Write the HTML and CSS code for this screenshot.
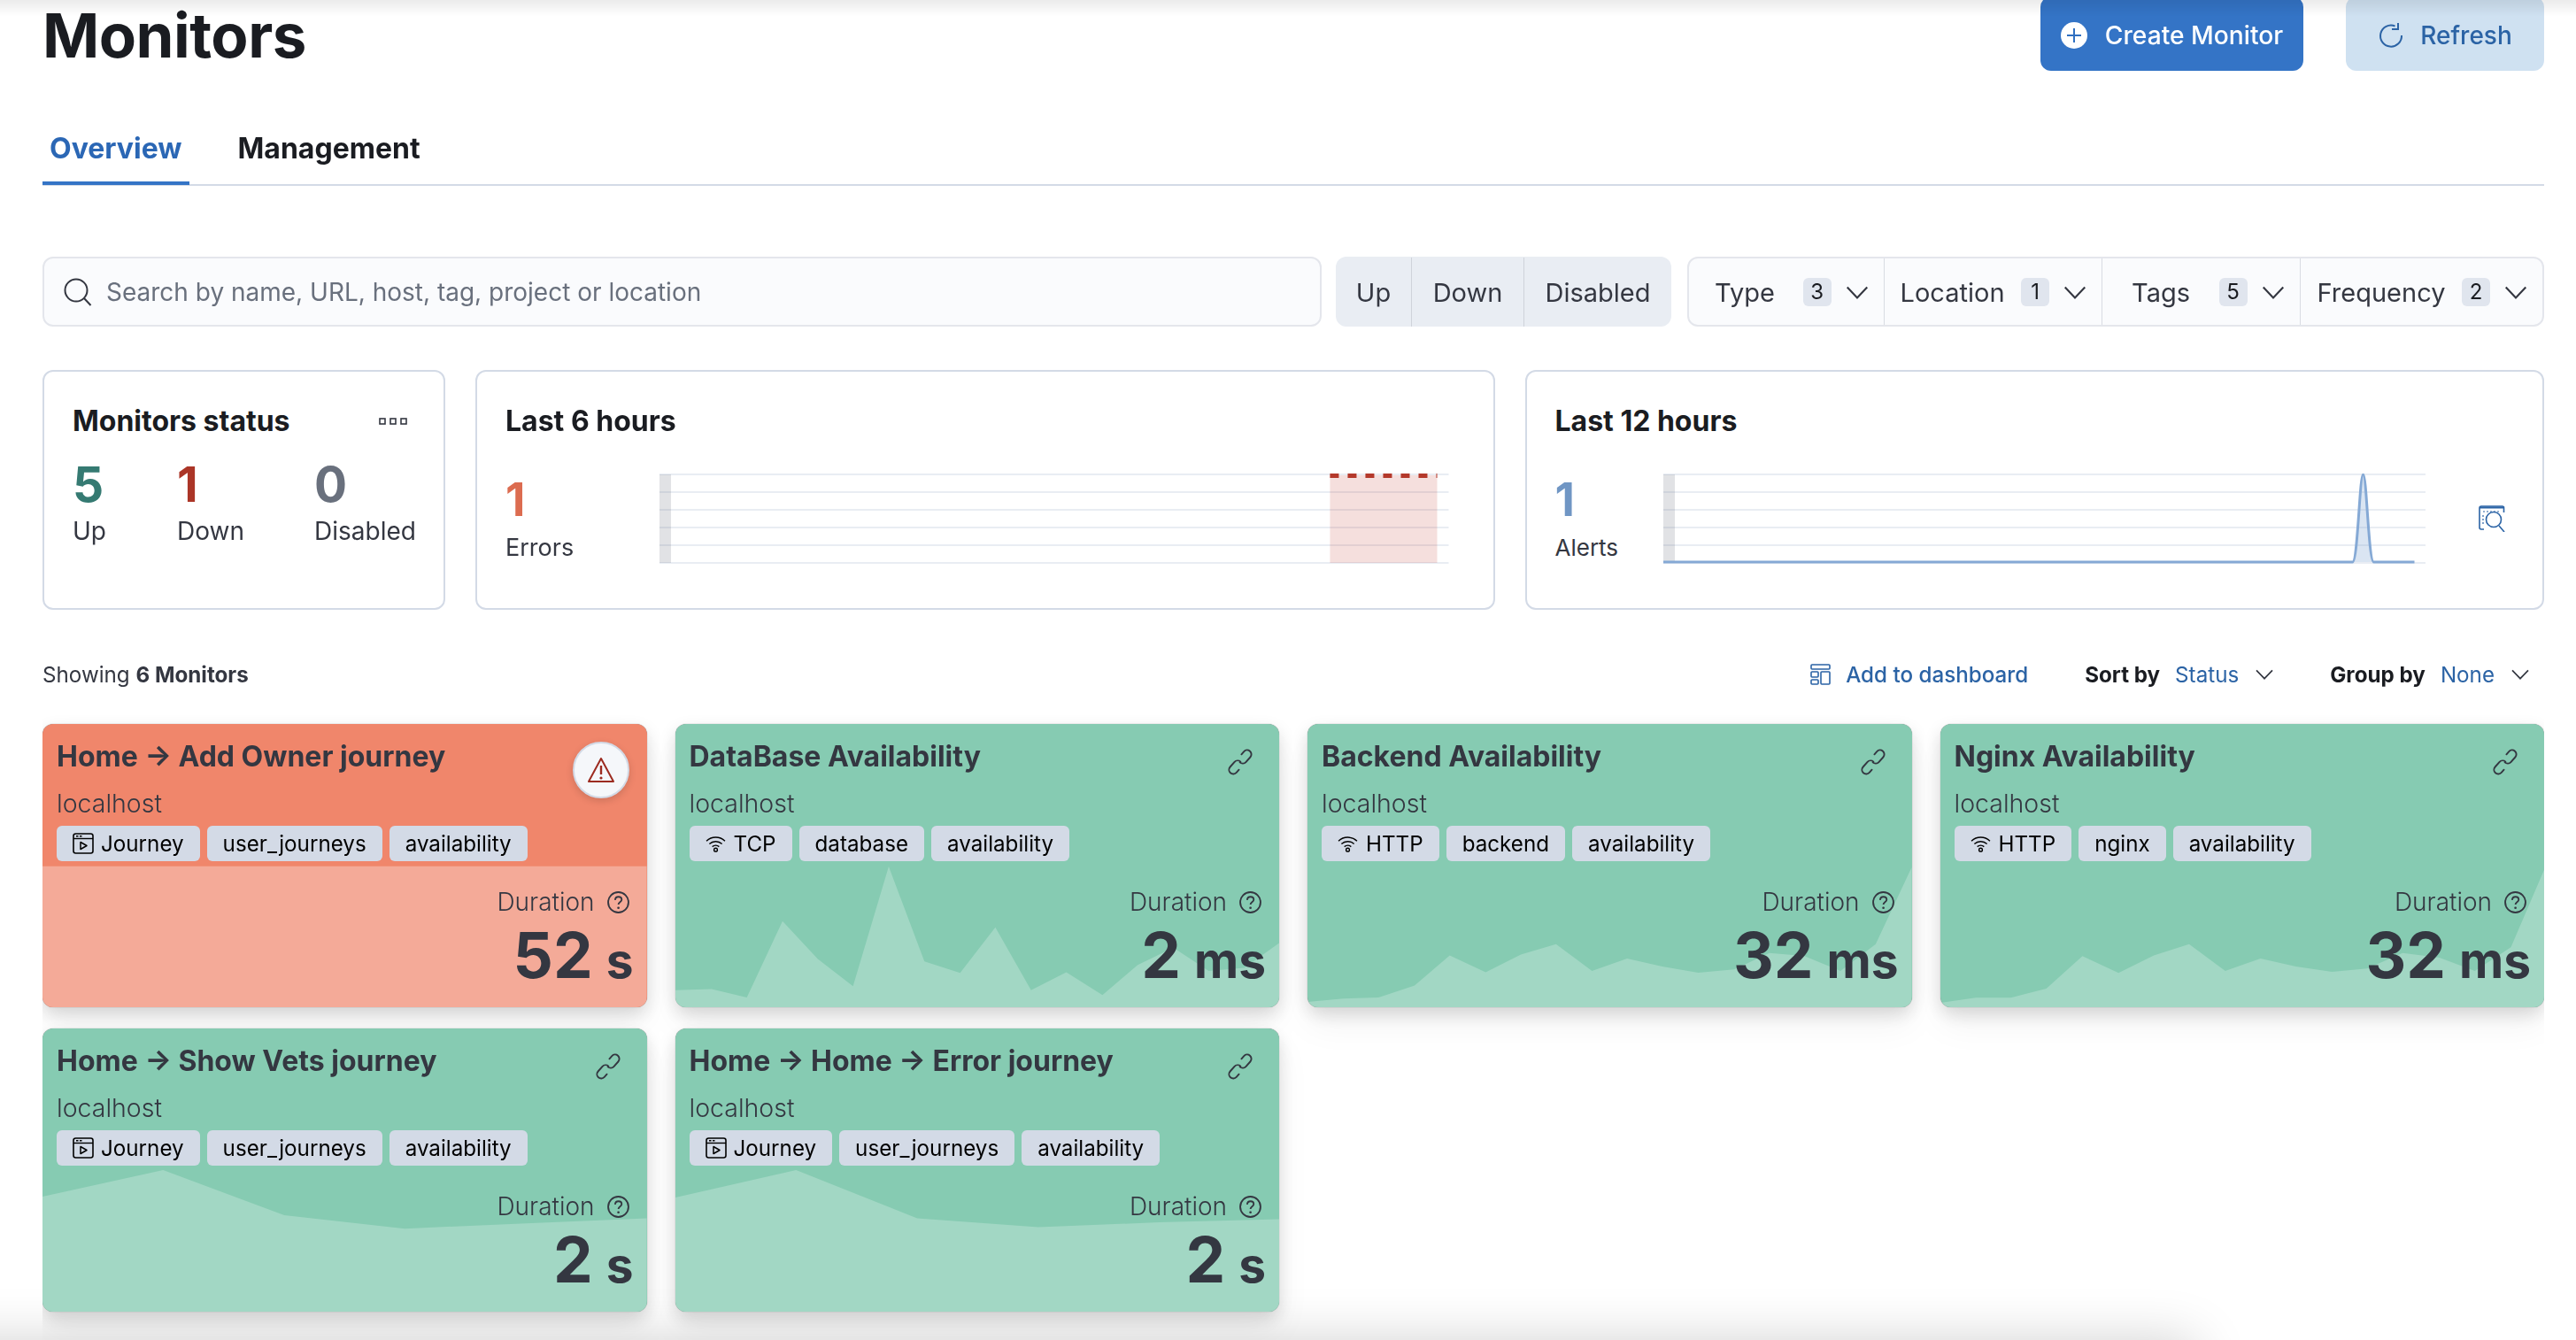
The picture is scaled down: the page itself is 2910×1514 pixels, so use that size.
FILE: index.html
```html
<!DOCTYPE html>
<html lang="en">
<head>
<meta charset="utf-8">
<title>Monitors</title>
<link rel="stylesheet" href="styles.css">
</head>
<body>
<svg class="defs" aria-hidden="true">
  <symbol id="i-link" viewBox="0 0 32 32"><g transform="rotate(-48 16 16)" fill="none" stroke="currentColor" stroke-width="1.800" stroke-linecap="round"><path d="M16.500 16a4.500 4.500 0 0 0-4.500-4.500H5a4.500 4.500 0 0 0 0 9h4"/><path d="M15.500 16a4.500 4.500 0 0 0 4.500 4.500h7a4.500 4.500 0 0 0 0-9h-4"/></g></symbol>
  <symbol id="i-help" viewBox="0 0 24 24"><circle cx="12" cy="12" r="11" fill="none" stroke="currentColor" stroke-width="1.800"/><path d="M8.500 9.500c.2-2.200 1.700-3.500 3.600-3.500 2 0 3.500 1.300 3.500 3.100 0 2.700-3.500 2.800-3.500 5.400" fill="none" stroke="currentColor" stroke-width="1.800"/><circle cx="12.100" cy="18" r="1.300" fill="currentColor"/></symbol>
  <symbol id="i-journey" viewBox="0 0 24 24"><rect x="1" y="1" width="22" height="22" rx="2.500" fill="none" stroke="currentColor" stroke-width="1.600"/><path d="M1 6.500h22" stroke="currentColor" stroke-width="1.400"/><path d="M4 3.800h2.500M8 3.800h2.500" stroke="currentColor" stroke-width="1.500"/><path d="M9 10.500v8l7-4z" fill="none" stroke="currentColor" stroke-width="1.500" stroke-linejoin="round"/></symbol>
  <symbol id="i-wifi" viewBox="0 0 24 20"><path d="M1 6.500c6.200-5.800 15.800-5.800 22 0M4.500 10c4.200-3.900 10.800-3.900 15 0M8 13.300c2.300-2 5.700-2 8 0" fill="none" stroke="currentColor" stroke-width="1.500"/><circle cx="12" cy="17" r="2" fill="none" stroke="currentColor" stroke-width="1.500"/></symbol>
  <symbol id="i-chev" viewBox="0 0 24 14"><path d="M1.500 1.500 12 12.500 22.500 1.500" fill="none" stroke="currentColor" stroke-width="2"/></symbol>
</svg>

<div class="top-shade"></div>
<div class="bottom-shade"></div>

<main class="page">
  <header class="head">
    <h1 class="title">Monitors</h1>
    <div class="head-actions">
      <button class="btn btn-primary">
        <svg class="btn-icon" viewBox="0 0 30 30"><circle cx="15" cy="15" r="15" fill="#fff"/><path d="M15 7v16M7 15h16" stroke="#2f6fc1" stroke-width="2"/></svg>
        Create Monitor
      </button>
      <button class="btn btn-soft">
        <svg class="btn-icon" viewBox="0 0 30 30"><path d="M19.500 4.500A12 12 0 1 0 27 15" fill="none" stroke="currentColor" stroke-width="2"/><path d="M21 1v7h-7" fill="none" stroke="currentColor" stroke-width="2" transform="translate(2 0)"/></svg>
        Refresh
      </button>
    </div>
  </header>

  <nav class="tabs">
    <a class="tab tab-active">Overview</a>
    <a class="tab">Management</a>
  </nav>

  <section class="filters">
    <div class="search">
      <svg class="search-icon" viewBox="0 0 32 32"><circle cx="14" cy="14" r="12.500" fill="none" stroke="#343741" stroke-width="2"/><path d="m23 23 7.500 8" stroke="#343741" stroke-width="2"/></svg>
      <span>Search by name, URL, host, tag, project or location</span>
    </div>
    <div class="status-group">
      <span class="status-item status-up">Up</span>
      <span class="status-item status-down">Down</span>
      <span class="status-item status-disabled">Disabled</span>
    </div>
    <div class="facet-group">
      <span class="facet facet-type">Type <b class="count">3</b><svg class="chev-lg"><use href="#i-chev"/></svg></span>
      <span class="facet facet-loc">Location <b class="count">1</b><svg class="chev-lg"><use href="#i-chev"/></svg></span>
      <span class="facet facet-tags">Tags <b class="count">5</b><svg class="chev-lg"><use href="#i-chev"/></svg></span>
      <span class="facet facet-freq">Frequency <b class="count">2</b><svg class="chev-lg"><use href="#i-chev"/></svg></span>
    </div>
  </section>

  <section class="stats">
    <article class="panel">
      <div class="panel-head">
        <h2 class="panel-title">Monitors status</h2>
        <svg class="more" viewBox="0 0 32 8"><g fill="none" stroke="#343741" stroke-width="1.600"><rect x="1" y="1" width="6" height="6"/><rect x="13" y="1" width="6" height="6"/><rect x="25" y="1" width="6" height="6"/></g></svg>
      </div>
      <div class="status-grid">
        <div><div class="big c-green">5</div><div class="big-label">Up</div></div>
        <div><div class="big c-red">1</div><div class="big-label">Down</div></div>
        <div><div class="big c-gray">0</div><div class="big-label">Disabled</div></div>
      </div>
    </article>

    <article class="panel panel-errors">
      <h2 class="panel-title">Last 6 hours</h2>
      <div class="metric">
        <div class="metric-text metric-wide"><div class="num c-orange">1</div><div class="metric-label">Errors</div></div>
        <svg class="chart" viewBox="0 0 891 102" preserveAspectRatio="none">
          <g class="grid-lines"><path d="M0 1h891M0 21h891M0 41h891M0 61h891M0 81h891M0 101h891"/></g>
          <rect x="0" y="1" width="13" height="100" fill="#69707d" opacity=".2"/>
          <rect x="757" y="2" width="121" height="99" fill="#bd271e" opacity=".15"/>
          <path d="M757 2.500h121" stroke="#b4392b" stroke-width="5" stroke-dasharray="10 10"/>
        </svg>
      </div>
    </article>

    <article class="panel panel-alerts">
      <h2 class="panel-title">Last 12 hours</h2>
      <div class="metric">
        <div class="metric-text metric-narrow"><div class="num c-blue">1</div><div class="metric-label metric-label-sm">Alerts</div></div>
        <svg class="chart" viewBox="0 0 862 102" preserveAspectRatio="none">
          <g class="grid-lines"><path d="M0 1h862M0 21h862M0 41h862M0 61h862M0 81h862M0 101h862"/></g>
          <rect x="0" y="1" width="13" height="100" fill="#69707d" opacity=".2"/>
          <path d="M0 100H779C785 100 787 1 791 1 795 1 797 100 803 100H849" fill="#85a9d5" fill-opacity=".3" stroke="#85a9d5" stroke-width="3"/>
        </svg>
        <svg class="inspect" viewBox="0 0 31 31"><path d="M7 28H4a2 2 0 0 1-2-2V4a2 2 0 0 1 2-2h24a2 2 0 0 1 1.500 1v6" fill="none" stroke="#2b63a5" stroke-width="1.600"/><path d="M2 3.500h27" stroke="#2b63a5" stroke-width="2"/><path d="M6 8h19M6 12v12" stroke="#2b63a5" stroke-width="1.200" stroke-dasharray="2 2"/><circle cx="18" cy="17" r="8.500" fill="#fff" stroke="#2b63a5" stroke-width="1.600"/><path d="m24 24 6 7" stroke="#2b63a5" stroke-width="1.600"/></svg>
      </div>
    </article>
  </section>

  <section class="toolbar">
    <div class="showing">Showing <b>6 Monitors</b></div>
    <div class="tools">
      <a class="tool-link">
        <svg class="dash-icon" viewBox="0 0 23 24"><g fill="none" stroke="#2b63a5" stroke-width="1.600"><rect x="1" y="1" width="21" height="5" rx="1"/><rect x="1" y="9" width="8" height="6" rx="1"/><rect x="1" y="18" width="8" height="5" rx="1"/><rect x="12" y="9" width="10" height="14" rx="1"/></g></svg>
        Add to dashboard
      </a>
      <span class="tool-select tool-sort"><b>Sort by</b><span class="tool-value">Status</span><svg class="chev-sm"><use href="#i-chev"/></svg></span>
      <span class="tool-select tool-group"><b>Group by</b><span class="tool-value">None</span><svg class="chev-sm"><use href="#i-chev"/></svg></span>
    </div>
  </section>

  <div class="grid-clip">
    <section class="monitors">

      <article class="mon mon-down">
        <svg class="spark" viewBox="0 0 1337 958" preserveAspectRatio="none"><path d="M0 481H1337V958H0Z"/></svg>
        <span class="alert-badge"><svg viewBox="0 0 32 30" class="alert-icon"><path d="M16 2 2 28h28Z" fill="none" stroke="#9c2b20" stroke-width="2" stroke-linejoin="round"/><path d="M16 10v10" stroke="#9c2b20" stroke-width="2.400"/><circle cx="16" cy="24" r="1.600" fill="#9c2b20"/></svg></span>
        <div class="mon-body">
          <h3 class="mon-title">Home → Add Owner journey</h3>
          <div class="mon-host">localhost</div>
          <div class="tags"><span class="tag"><svg class="tag-journey"><use href="#i-journey"/></svg>Journey</span><span class="tag">user_journeys</span><span class="tag">availability</span></div>
          <div class="mon-foot">
            <div class="duration">Duration <svg class="help"><use href="#i-help"/></svg></div>
            <div class="value">52<small>s</small></div>
          </div>
        </div>
      </article>

      <article class="mon mon-up">
        <svg class="spark" viewBox="0 0 1337 958" preserveAspectRatio="none"><path d="M0 900 80 897 158 925 237 667 315 795 393 887 472 482 551 803 630 842 708 688 787 900 865 840 945 917 1023 815 1102 757 1180 835 1259 825 1337 740V958H0Z"/></svg>
        <svg class="link"><use href="#i-link"/></svg>
        <div class="mon-body">
          <h3 class="mon-title">DataBase Availability</h3>
          <div class="mon-host">localhost</div>
          <div class="tags"><span class="tag"><svg class="tag-wifi"><use href="#i-wifi"/></svg>TCP</span><span class="tag">database</span><span class="tag">availability</span></div>
          <div class="mon-foot">
            <div class="duration">Duration <svg class="help"><use href="#i-help"/></svg></div>
            <div class="value">2<small>ms</small></div>
          </div>
        </div>
      </article>

      <article class="mon mon-up">
        <svg class="spark" viewBox="0 0 739 958" preserveAspectRatio="none"><path d="M0 940 44 929 87 925 131 885 174 783 218 840 261 780 304 745 348 835 391 793 434 820 478 841 522 830 565 775 608 785 652 835 695 745 739 485V958H0Z"/></svg>
        <svg class="link"><use href="#i-link"/></svg>
        <div class="mon-body">
          <h3 class="mon-title">Backend Availability</h3>
          <div class="mon-host">localhost</div>
          <div class="tags"><span class="tag"><svg class="tag-wifi"><use href="#i-wifi"/></svg>HTTP</span><span class="tag">backend</span><span class="tag">availability</span></div>
          <div class="mon-foot">
            <div class="duration">Duration <svg class="help"><use href="#i-help"/></svg></div>
            <div class="value">32<small>ms</small></div>
          </div>
        </div>
      </article>

      <article class="mon mon-up">
        <svg class="spark" viewBox="0 0 736 958" preserveAspectRatio="none"><path d="M0 943 43 926 86 926 129 895 173 785 217 842 260 783 303 745 347 835 390 793 433 820 477 838 520 827 563 775 608 790 651 835 695 755 736 490V958H0Z"/></svg>
        <svg class="link"><use href="#i-link"/></svg>
        <div class="mon-body">
          <h3 class="mon-title">Nginx Availability</h3>
          <div class="mon-host">localhost</div>
          <div class="tags"><span class="tag"><svg class="tag-wifi"><use href="#i-wifi"/></svg>HTTP</span><span class="tag">nginx</span><span class="tag">availability</span></div>
          <div class="mon-foot">
            <div class="duration">Duration <svg class="help"><use href="#i-help"/></svg></div>
            <div class="value">32<small>ms</small></div>
          </div>
        </div>
      </article>

      <article class="mon mon-up">
        <svg class="spark" viewBox="0 0 1337 958" preserveAspectRatio="none"><path d="M0 569 267 479 535 632 802 677 1070 659 1337 642V958H0Z"/></svg>
        <svg class="link"><use href="#i-link"/></svg>
        <div class="mon-body">
          <h3 class="mon-title">Home → Show Vets journey</h3>
          <div class="mon-host">localhost</div>
          <div class="tags"><span class="tag"><svg class="tag-journey"><use href="#i-journey"/></svg>Journey</span><span class="tag">user_journeys</span><span class="tag">availability</span></div>
          <div class="mon-foot">
            <div class="duration">Duration <svg class="help"><use href="#i-help"/></svg></div>
            <div class="value">2<small>s</small></div>
          </div>
        </div>
      </article>

      <article class="mon mon-up">
        <svg class="spark" viewBox="0 0 1337 958" preserveAspectRatio="none"><path d="M0 572 267 479 535 642 803 672 1070 656 1337 645V958H0Z"/></svg>
        <svg class="link"><use href="#i-link"/></svg>
        <div class="mon-body">
          <h3 class="mon-title">Home → Home → Error journey</h3>
          <div class="mon-host">localhost</div>
          <div class="tags"><span class="tag"><svg class="tag-journey"><use href="#i-journey"/></svg>Journey</span><span class="tag">user_journeys</span><span class="tag">availability</span></div>
          <div class="mon-foot">
            <div class="duration">Duration <svg class="help"><use href="#i-help"/></svg></div>
            <div class="value">2<small>s</small></div>
          </div>
        </div>
      </article>

    </section>
  </div>
</main>
</body>
</html>
```

FILE: styles.css
```css
* { box-sizing: border-box; }
html, body { margin: 0; height: 100%; overflow: hidden; background: #fff; }
body { font-family: Inter, "Noto Sans", sans-serif; color: #343741; }
.defs { position: absolute; width: 0; height: 0; }

.top-shade {
  position: fixed; left: 0; right: 0; top: 0; height: 18px; z-index: 5;
  background: linear-gradient(rgba(0,0,0,.08), rgba(0,0,0,0));
}
.bottom-shade {
  position: fixed; left: -120px; width: 2600px; bottom: -120px; height: 120px;
  box-shadow: 0 0 60px rgba(0,0,0,.18);
}

.page { position: relative; padding: 0 36px 0 48px; height: 1514px; display: flex; flex-direction: column; }

.head { display: flex; justify-content: space-between; height: 80px; }
.title { margin: 0; font-size: 69px; line-height: 80px; font-weight: 700; color: #1a1c21; letter-spacing: -.5px; }
.head-actions { display: flex; gap: 48px; }
.btn {
  display: flex; align-items: center; justify-content: center; gap: 20px;
  height: 84px; margin-top: -4px; padding: 3px 0 0; border: 0; border-radius: 12px;
  font: 500 28.200px Inter, sans-serif;
}
.btn-primary { width: 297px; background: #3474c6; color: #fff; }
.btn-soft { width: 224px; background: #cfe1f1; color: #2b63a5; gap: 18px; font-size: 28px; }
.btn-icon { width: 30px; height: 30px; flex: none; }

.tabs { display: flex; gap: 47px; height: 130px; padding-top: 64px; border-bottom: 2px solid #d3dae6; }
.tab { height: 65px; padding: 0 8px; font-size: 32px; line-height: 48px; font-weight: 700; color: #1a1c21; }
.tab-active { color: #2b67b5; border-bottom: 4px solid #3474c6; }

.filters { display: flex; margin-top: 80px; height: 79px; }
.search {
  width: 1445px; display: flex; align-items: center; gap: 16px; padding: 1px 0 0 22px;
  background: #fafbfd; border: 2px solid #e4e6ec; border-radius: 12px;
  font-size: 28px; color: #69707d;
}
.search-icon { width: 32px; height: 32px; flex: none; }
.status-group {
  display: flex; width: 379px; margin-left: 16px; padding-top: 1px; background: #e9edf3; border-radius: 12px;
  font-size: 29px; font-weight: 400;
}
.status-item { display: flex; align-items: center; justify-content: center; border-left: 1px solid #cfd3da; }
.status-item:first-child { border-left: 0; }
.status-up { width: 85px; }
.status-down { width: 127px; }
.status-disabled { width: 167px; }
.facet-group {
  display: flex; width: 968px; margin-left: 18px; background: #fafbfd;
  border: 2px solid #e4e6ec; border-radius: 12px; font-size: 29px;
}
.facet { display: flex; align-items: center; padding: 1px 0 0 18px; border-left: 1px solid #d9dce3; }
.facet:first-child { border-left: 0; }
.facet-type { width: 220px; padding-left: 29px; }
.facet-loc { width: 247px; }
.facet-tags { width: 224px; padding-left: 33px; }
.facet-freq { width: 275px; padding-left: 19px; }
.count {
  display: inline-block; width: 32px; height: 32px; margin-left: auto; border-radius: 6px;
  background: #e0e5ee; color: #1a1c21; font-size: 24px; line-height: 32px; font-weight: 400; text-align: center;
}
.chev-lg { width: 26px; height: 15px; margin: 0 17px 0 16px; flex: none; }

.stats { display: grid; grid-template-columns: 455px minmax(0, 1fr) minmax(0, 1fr); gap: 34px; margin-top: 49px; height: 271px; }
.panel { min-width: 0; border: 2px solid #d3dae6; border-radius: 12px; padding: 34px 34px 34px 32px; background: #fff; }
.panel-head { display: flex; justify-content: space-between; align-items: center; }
.panel-title { margin: 0; font-size: 32px; line-height: 44px; font-weight: 700; color: #1a1c21; }
.more { width: 32px; height: 8px; margin-right: 7px; }
.status-grid { display: grid; grid-template-columns: 118px 155px auto; margin-top: 19px; }
.big { font-size: 55px; line-height: 60px; font-weight: 700; }
.big-label { margin-top: 3px; font-size: 28px; line-height: 40px; }
.metric-label { font-size: 27px; line-height: 40px; }
.metric-label-sm { font-size: 26px; }
.num { font-size: 52px; line-height: 60px; font-weight: 700; margin-bottom: 4px; }
.c-green { color: #357a72; }
.c-red { color: #ab3527; }
.c-gray { color: #69707d; }
.c-orange { color: #dc6c50; }
.c-blue { color: #7096c4; }
.metric { display: flex; margin-top: 37px; }
.metric-text { flex: none; }
.metric-wide { width: 174px; }
.metric-narrow { width: 122px; }
.chart { flex: 1; min-width: 0; height: 102px; }
.panel-errors .chart { margin-right: 16px; }
.grid-lines path { stroke: #e9edf3; stroke-width: 2; fill: none; }
.inspect { flex: none; width: 31px; height: 31px; margin: 35px 8px 0 59px; }

.toolbar { display: flex; justify-content: space-between; align-items: center; margin-top: 57px; height: 32px; font-size: 24.200px; }
.showing b { font-weight: 700; }
.tools { display: flex; align-items: center; padding-right: 16px; }
.tool-link { display: flex; align-items: center; gap: 17px; color: #2b63a5; font-weight: 500; }
.dash-icon { width: 23px; height: 24px; }
.tool-select { display: flex; align-items: center; }
.tool-select b { font-weight: 700; color: #1a1c21; }
.tool-value { margin-left: 17px; color: #2b63a5; }
.tool-sort { margin-left: 64px; }
.tool-group { margin-left: 63px; }
.chev-sm { width: 22px; height: 12px; margin-left: 18px; flex: none; }

.grid-clip { margin-top: 24px; padding-top: 16px; flex: 1; overflow: hidden; }
.monitors { display: grid; grid-template-columns: repeat(4, minmax(0, 1fr)); grid-auto-rows: 320px; gap: 24px 32px; }

.mon { position: relative; border-radius: 12px; box-shadow: 0 0 1px rgba(0,0,0,.55), 0 8px 20px rgba(0,0,0,.14), 0 20px 40px rgba(0,0,0,.05); }
.mon-down { background: #f0866b; }
.mon-up { background: #86cbb2; }
.spark { position: absolute; inset: 0; width: 100%; height: 100%; border-radius: 12px; }
.mon-up .spark path { fill: #a2d7c4; }
.mon-down .spark path { fill: #f4aa98; }
.mon-body { position: relative; display: flex; flex-direction: column; height: 100%; padding: 17px 15px 16px 16px; }
.mon-title { margin: 0; font-size: 32px; line-height: 40px; font-weight: 700; color: #343741; }
.mon-host { margin-top: 13px; font-size: 28.500px; line-height: 40px; font-weight: 300; color: #343741; }
.tags { display: flex; gap: 8px; margin-top: 5px; }
.tag {
  display: flex; align-items: center; height: 40px; padding: 0 18px; border-radius: 6px;
  background: #d3dae6; color: #000; font-size: 24.200px; font-weight: 400;
}
.tag-journey { width: 24px; height: 24px; margin-right: 8px; }
.tag-wifi { width: 23px; height: 19px; margin-right: 9px; }
.mon-foot { margin-top: auto; text-align: right; }
.duration { display: flex; justify-content: flex-end; align-items: center; gap: 14px; padding-right: 5px; font-size: 28px; line-height: 40px; font-weight: 300; }
.help { width: 25px; height: 25px; flex: none; }
.value { margin-top: 3px; font-size: 71px; line-height: 74px; font-weight: 700; color: #343741; }
.value small { margin-left: 15px; font-size: 55px; font-weight: 700; }
.link { position: absolute; top: 26px; right: 27px; width: 34px; height: 34px; color: #343741; z-index: 1; }
.alert-badge {
  position: absolute; top: 20px; right: 20px; width: 64px; height: 64px; z-index: 1;
  display: flex; align-items: center; justify-content: center;
  background: #f5f7fa; border: 2px solid #d3dae6; border-radius: 50%; box-shadow: 0 3px 8px rgba(0,0,0,.15);
}
.alert-icon { width: 32px; height: 30px; }
```
